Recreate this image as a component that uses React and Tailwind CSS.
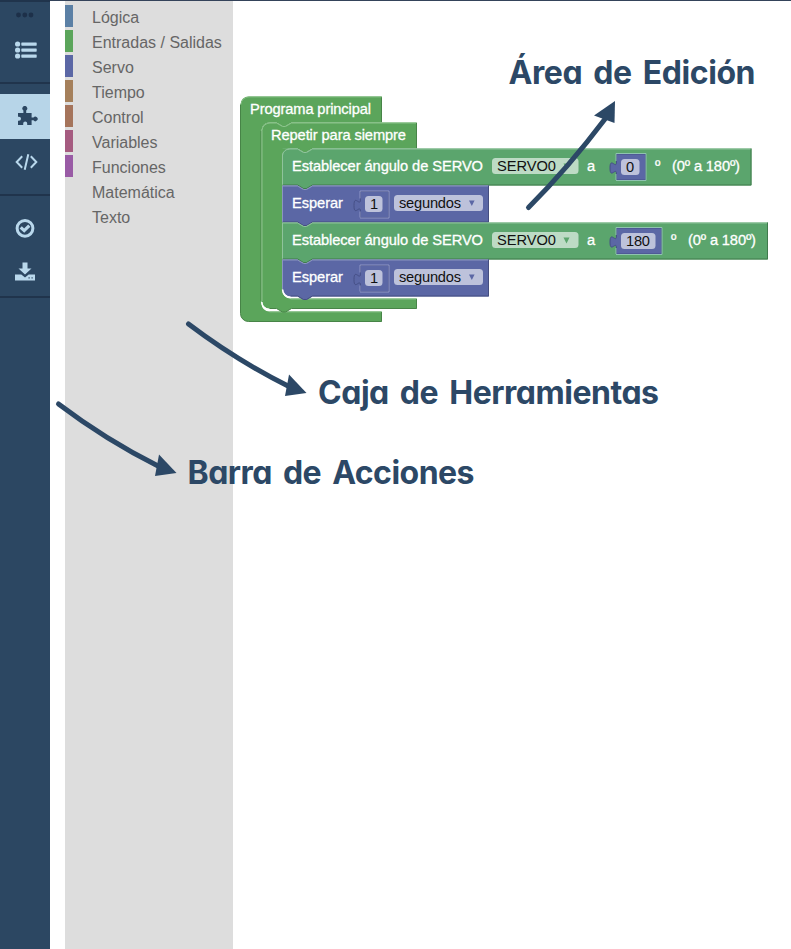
const LABEL = "[font-family:'Liberation_Sans',Arial,sans-serif] text-[14.67px]";
const TITLE = "[font-family:Inter,Lato,sans-serif] text-[32px] font-bold [word-spacing:4px] [font-feature-settings:'cv11'] fill-[#2c4866]";

const categories = [
  ["Lógica", "bg-[#5b80a5]"],
  ["Entradas / Salidas", "bg-[#5ba55b]"],
  ["Servo", "bg-[#5b67a5]"],
  ["Tiempo", "bg-[#a5805b]"],
  ["Control", "bg-[#a5745b]"],
  ["Variables", "bg-[#a55b80]"],
  ["Funciones", "bg-[#995ba5]"],
  ["Matemática", ""],
  ["Texto", ""],
];

function Action({ children, className = "" }) {
  return <div className={"flex w-full shrink-0 items-center justify-center " + className}>{children}</div>;
}

function Actions() {
  return (
    <nav className="flex h-full w-[50px] shrink-0 flex-col bg-[#2c4762] text-[#b9d8ec]">
      <Action className="h-[27px] border-t-2 border-[#20344c] text-[#1d3049]">
        <svg width="18" height="6" viewBox="0 0 18 6" fill="currentColor">
          <circle cx="2.5" cy="3" r="2.4" /><circle cx="8.8" cy="3" r="2.4" /><circle cx="15" cy="3" r="2.4" />
        </svg>
      </Action>
      <Action className="h-[57px] border-b-2 border-[#20344c] pb-[10px] pl-[1px]">
        <svg width="22" height="18" viewBox="0 0 22 18" fill="currentColor">
          <circle cx="2.6" cy="3" r="2.6" /><circle cx="2.6" cy="9" r="2.6" /><circle cx="2.6" cy="15" r="2.6" />
          <rect x="6.3" y="1.4" width="15.4" height="3.3" rx=".6" />
          <rect x="6.3" y="7.4" width="15.4" height="3.3" rx=".6" />
          <rect x="6.3" y="13.4" width="15.4" height="3.3" rx=".6" />
        </svg>
      </Action>
      <Action className="mt-[10px] h-[45px] bg-[#b7d5e8] pb-[2px] pl-[5px] text-[#2c4762]">
        <svg width="21" height="20" viewBox="0 0 21 20" fill="currentColor">
          <path d="M1 7H6.4V4.4A2.4 2.4 0 1 1 9.2 4.4V7H14.6V11.5H16.5A2.3 2.3 0 1 1 16.5 14.3H14.6V19H10.2V17.5A2 2 0 1 0 6.2 17.5V19H1V14.8H2A2 2 0 1 0 2 10.8H1Z" />
        </svg>
      </Action>
      <Action className="h-[57px] border-b-2 border-[#20344c] pb-[9px] pl-[2px]">
        <svg width="23" height="18" viewBox="0 0 23 18" fill="none" stroke="currentColor" strokeWidth="2">
          <path d="M7.2 3.3 1.7 9l5.5 5.7M15.8 3.3 21.3 9l-5.5 5.7M13.3 1.2 9.7 16.8" />
        </svg>
      </Action>
      <Action className="mt-[10px] h-[44px]">
        <svg width="20" height="20" viewBox="0 0 20 20" fill="none" stroke="currentColor">
          <circle cx="10" cy="10.3" r="7.9" strokeWidth="3" />
          <path d="m5.7 9.3 3.5 3.3 5.1-5" strokeWidth="3.2" />
        </svg>
      </Action>
      <Action className="h-[48px] border-b-2 border-[#20344c] pb-[3px]">
        <svg width="20" height="19" viewBox="0 0 20 19" fill="currentColor">
          <path d="M7.5.5h5v6h4L10 12.5 3.5 6.5h4Z" />
          <path fillRule="evenodd" d="M0 12.5h6.3L10 15.5l3.7-3H20V18.4H0ZM13.5 15.3v1.2h1.2v-1.2Zm3 0v1.2h1.2v-1.2Z" />
        </svg>
      </Action>
    </nav>
  );
}

function Toolbox() {
  return (
    <aside className="flex h-full w-[168px] shrink-0 flex-col gap-[3px] bg-[#ddd] pt-[4px]">
      {categories.map(([name, color]) => (
        <div key={name} className="flex h-[22px] shrink-0 items-center">
          <span className={"h-full w-2 " + color} />
          <span className="pt-[4px] pl-[19px] [font-family:'Liberation_Sans',Arial,sans-serif] text-[16px] leading-[22px] whitespace-nowrap text-[#666]">{name}</span>
        </div>
      ))}
    </aside>
  );
}

function Label({ x, y, w, children }) {
  return <text x={x} y={y} textLength={w} className={LABEL} fill="#fff" stroke="#fff" strokeWidth=".3">{children}</text>;
}

function Field({ x, y, w, tx, tw, fill, children }) {
  return (
    <g>
      <rect x={x} y={y} width={w} height="16" rx="3.5" fill={fill} />
      <text x={tx} y={y + 13} textLength={tw} className={LABEL} fill="#111">{children}</text>
    </g>
  );
}

function NumberInput({ x, y, w, fieldY, tx, tw, edge, children }) {
  return (
    <g>
      <path d={`M${x} ${y}h${w}v26h${-w}v-6c0-8-6.5 6-6.5-6s6.5 2 6.5-6Z`} fill="#5b67a5" stroke="#454f86" />
      <path d={`M${x - 0.5} ${y + 26.5}h${w + 1}v-27`} fill="none" stroke={edge} />
      <path d={`M${x - 0.5} ${y + 7}v-7.5h${w + 1}`} fill="none" stroke={edge} />
      <path d={`M${x - 0.5} ${y + 26}v-6`} fill="none" stroke={edge} />
      <Field x={x + 4.5} y={fieldY} w={w - 10.5} tx={tx} tw={tw} fill="#bdc2db">{children}</Field>
    </g>
  );
}

function Statement({ y, right, fill, dark, light, last }) {
  const bottom = y + 37;
  const corner = last ? "H290.5a8 8 0 0 1-8-8" : "H282.5";
  return (
    <g>
      <path d={`M282.5 ${y}H297.5l6 3.5h3l6-3.5H${right}V${bottom}H312.5l-6 3.5h-3l-6-3.5${corner}Z`} fill={fill} />
      <path d={`M${right - 0.5} ${y}V${bottom - 0.5}H312.5l-6 3.5h-3l-6-3.5H${last ? 290.5 : 282.5}`} fill="none" stroke={dark} />
      <path d={`M282.5 ${bottom - (last ? 8 : 1)}V${y + 0.5}H297.5l6 3.5h3l6-3.5H${right - 1}`} fill="none" stroke={light} />
    </g>
  );
}

function ServoRow({ y, right, valueWidth, value, valueText, shift }) {
  return (
    <g>
      <Statement y={y} right={right} fill="#5ba56d" dark="#407a4d" light="#8fc39b" />
      <Label x={292} y={y + 22.5} w={191}>Establecer ángulo de SERVO</Label>
      <Field x={492} y={y + 9.5} w={86.5} tx={497} tw={59} fill="#bddbc5">SERVO0</Field>
      <path d={`M563.5 ${y + 15}h6l-3 6z`} fill="#5ba56d" />
      <Label x={587} y={y + 22.5}>a</Label>
      <NumberInput x={616.5} y={y + 5.5} fieldY={y + 10.5} w={valueWidth} tx={626} tw={valueText} edge="#8fc3b0">{value}</NumberInput>
      <Label x={655 + shift} y={y + 22.5}>º</Label>
      <Label x={672 + shift} y={y + 22.5} w={68}>(0º a 180º)</Label>
    </g>
  );
}

function WaitRow({ y, last }) {
  return (
    <g>
      <Statement y={y} right={489} fill="#5b67a5" dark="#454e80" light="#8c95c1" last={last} />
      <Label x={292} y={y + 22.5} w={51}>Esperar</Label>
      <NumberInput x={360.5} y={y + 6} fieldY={y + 10.5} w={28} tx={370} edge="#8f97c6">1</NumberInput>
      <Field x={394} y={y + 9.5} w={89} tx={399} tw={62} fill="#bdc2db">segundos</Field>
      <path d={`M469 ${y + 15}h5.6l-2.8 5.5z`} fill="#5b67a5" />
    </g>
  );
}

function Blocks() {
  return (
    <g>
      <path d="M240.5 104.5a8 8 0 0 1 8-8H382V122.5H291.5l-6 3.5h-3l-6-3.5H269.5a8 8 0 0 0-8 8V303.5a8 8 0 0 0 8 8H382V321.5H248.5a8 8 0 0 1-8-8Z" fill="#5ba55b" />
      <path d="M381.5 97V122M381.5 312V321.5H248.5a8 8 0 0 1-8-8V104.5" fill="none" stroke="#478447" />
      <path d="M241 104.5a8 8 0 0 1 8-7.5H381.5M269.5 312H381" fill="none" stroke="#7dba7d" />
      <path d="M261.5 130.5a8 8 0 0 1 8-8H276.5l6 3.5h3l6-3.5H417V148.5H312.5l-6 3.5h-3l-6-3.5H290.5a8 8 0 0 0-8 8V290.5a8 8 0 0 0 8 8H417V308.5H291.5l-6 3.5h-3l-6-3.5H269.5a8 8 0 0 1-8-8Z" fill="#5ba55b" />
      <path d="M416.5 123V148M416.5 299V308.5H291.5l-6 3.5h-3l-6-3.5H269.5M261 301V131" fill="none" stroke="#478447" />
      <path d="M262 301V130.5a8 8 0 0 1 8-7.5H276.5l6 3.5h3l6-3.5H416M290.5 299H416" fill="none" stroke="#8cc48c" />
      <path d="M261.8 302a8 8 0 0 0 8 8" fill="none" stroke="#fff" strokeWidth="1.6" />
      <ServoRow y={148.5} right={751.5} valueWidth={29} value="0" shift={0} />
      <WaitRow y={185.5} />
      <ServoRow y={222.5} right={768} valueWidth={45} value="180" valueText={24} shift={16} />
      <WaitRow y={259.5} last />
      <path d="M282 155a8 8 0 0 1 6-6.5H282Z" fill="#5ba55b" />
      <path d="M282.5 155.5a7 7 0 0 1 7-6.5" fill="none" stroke="#8fc39b" />
      <path d="M282.6 289.5a8 8 0 0 0 8 8" fill="none" stroke="#fff" strokeWidth="1.6" />
      <Label x={250} y={114} w={121}>Programa principal</Label>
      <Label x={271} y={140} w={135}>Repetir para siempre</Label>
    </g>
  );
}

function Annotations() {
  return (
    <g>
      <g fill="none" stroke="#2c4866" strokeWidth="5" strokeLinecap="round">
        <path d="M528.5 207.5Q568 168 605 119" />
        <path d="M188.5 324Q236 360 289 386.5" />
        <path d="M58.5 404Q106 440 159 466.5" />
      </g>
      <g fill="#2c4866">
        <path d="M615 101 594 115.5 614.5 123Z" />
        <path d="M306.5 393 289 374.5 285 396Z" />
        <path d="M176.5 473 159 454.5 155 476Z" />
      </g>
      <text x="508.5" y="84" textLength="247" className={TITLE}>Área de Edición</text>
      <text x="318" y="404" textLength="341" className={TITLE}>Caja de Herramientas</text>
      <text x="187.5" y="484" textLength="287" className={TITLE}>Barra de Acciones</text>
    </g>
  );
}

export default function App() {
  return (
    <div className="relative flex h-[949px] w-[791px] overflow-hidden bg-white">
      <Actions />
      <div className="flex h-full flex-1 border-t border-[#34435a] pl-[15px]">
        <Toolbox />
      </div>
      <svg className="absolute top-0 left-0" width="791" height="949" viewBox="0 0 791 949">
        <Blocks />
        <Annotations />
      </svg>
    </div>
  );
}
